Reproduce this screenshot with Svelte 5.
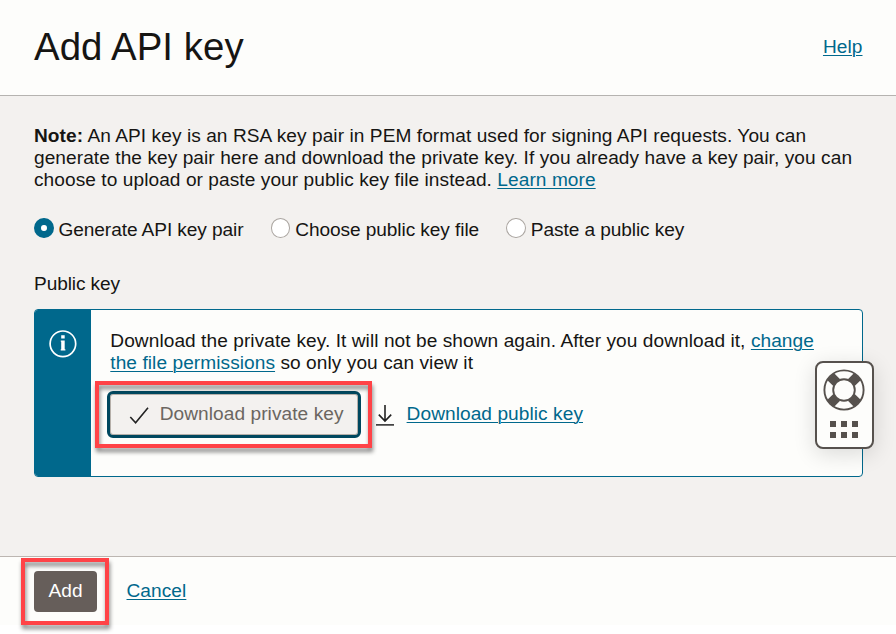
<script>
  const options = ['Generate API key pair', 'Choose public key file', 'Paste a public key'];
  let selected = $state(0);
  const dots = [0, 1, 2, 3, 4, 5];
</script>

<div class="panel">
  <header>
    <h1>Add API key</h1>
    <a href="#help">Help</a>
  </header>

  <main>
    <p class="note">
      <b>Note:</b> An API key is an RSA key pair in PEM format used for signing API requests. You can<br />
      generate the key pair here and download the private key. If you already have a key pair, you can<br />
      choose to upload or paste your public key file instead. <a href="#more">Learn more</a>
    </p>

    <div class="radios">
      {#each options as option, i}
        <label>
          <input type="radio" name="source" value={i} bind:group={selected} />
          <span>{option}</span>
        </label>
      {/each}
    </div>

    <div class="field">Public key</div>

    <section class="notice">
      <div class="stripe">
        <svg width="28" height="28" viewBox="0 0 28 28">
          <circle cx="13.9" cy="13.8" r="12.8" fill="none" stroke="#fff" stroke-width="1.7" />
          <path d="M12.2 5.2h3.5v3.2h-3.5zM11.8 10.4h3.9v8.8h.7v1.3h-4.7v-1.3h.5v-7.4h-.4z" fill="#fff" />
        </svg>
      </div>
      <div class="content">
        <p>
          Download the private key. It will not be shown again. After you download it, <a href="#permissions">change<br />
          the file permissions</a> so only you can view it
        </p>
        <div class="actions">
          <div class="mark private">
            <button class="download">
              <svg width="20" height="18" viewBox="0 0 20 18">
                <path d="M1.3 10 6.6 15.7 19 .8" fill="none" stroke="#222" stroke-width="1.6" />
              </svg>
              <span>Download private key</span>
            </button>
          </div>
          <svg class="arrow" width="18" height="22" viewBox="0 0 18 22">
            <path d="M9 0v16M2.8 9.6 9 16l6.2-6.4" fill="none" stroke="#222" stroke-width="1.6" />
            <path d="M0 19.8h18" stroke="#444" stroke-width="1.7" />
          </svg>
          <a href="#public">Download public key</a>
        </div>
      </div>
    </section>
  </main>

  <footer>
    <div class="mark submit"><button class="add">Add</button></div>
    <a href="#cancel">Cancel</a>
  </footer>

  <aside>
    <svg width="42" height="42" viewBox="0 0 42 42">
      <g fill="none" stroke="#56514d">
        <path d="M13.7 13.7 7.5 7.5M28.3 13.7l6.2-6.2M28.3 28.3l6.2 6.2M13.7 28.3l-6.2 6.2" stroke-width="9.6" />
        <circle cx="21" cy="21" r="19.6" stroke-width="1.9" />
        <circle cx="21" cy="21" r="10.8" fill="#fdfdfb" stroke-width="1.9" />
      </g>
    </svg>
    <div class="dots">
      {#each dots as dot (dot)}<i></i>{/each}
    </div>
  </aside>
</div>

<style>
  :global(body) { background: #fff; overflow: hidden; }
  .panel {
    position: relative; box-sizing: border-box; width: 896px; height: 634px;
    display: flex; flex-direction: column;
    font: 19.1px/22px "Liberation Sans", Arial, sans-serif; letter-spacing: .067px; color: #161513; background: #fff;
  }
  h1, p { margin: 0; font-weight: 400; }
  a { color: #00688c; text-decoration: underline; text-decoration-thickness: 1px; text-underline-offset: 2px; }
  header {
    box-sizing: border-box; height: 96px; flex: none; display: flex; align-items: center;
    justify-content: space-between; padding: 0 33.5px 1px 34px; border-bottom: 1px solid #b5b3b0; background: #fdfdfb;
  }
  h1 { font-size: 38.4px; line-height: 46px; letter-spacing: .05px; }
  main { box-sizing: border-box; height: 460px; flex: none; padding: 29px 33px 0 34px; background: #f3f1ef; }
  .note { white-space: nowrap; }
  .radios { display: flex; gap: 27.2px; margin-top: 28px; letter-spacing: -.085px; }
  label { display: flex; align-items: center; gap: 5px; height: 22px; white-space: nowrap; }
  input {
    appearance: none; box-sizing: border-box; flex: none; width: 19.5px; height: 20px; margin: -5px 0 0;
    border: 1px solid #aaa5a0; border-radius: 50%; background: #fff;
  }
  input:checked { border: 7px solid #00688c; }
  .field { margin-top: 32px; letter-spacing: -.1px; }
  .notice {
    box-sizing: border-box; display: flex; height: 168px; margin-top: 14px; overflow: hidden;
    border: 1px solid #00688c; border-radius: 4px; background: #fdfdfb;
  }
  .stripe { box-sizing: border-box; width: 56px; flex: none; padding: 20px 0 0 14px; background: #00688c; }
  .content { padding: 20px 0 0 19.3px; white-space: nowrap; }
  .actions { display: flex; align-items: flex-start; margin: 7px 0 0 -15.3px; }
  .mark { position: relative; box-sizing: border-box; }
  .mark::after {
    content: ""; position: absolute; inset: 0; border: 4px solid #ff4347;
    filter: drop-shadow(1px 4px 2px #0007); pointer-events: none;
  }
  .private { width: 277px; height: 67px; padding: 10px 12px; }
  button { font: inherit; letter-spacing: inherit; }
  .download {
    box-sizing: border-box; display: flex; align-items: center; width: 254px; height: 47px; padding: 0 0 2px 19px;
    border: 3px solid #00485f; border-radius: 6px; background: #f3f1ef; color: #6b6661;
    box-shadow: inset 0 0 0 1px #b5afa9;
  }
  .download svg { flex: none; margin: 4px 10.7px 0 0; }
  .arrow { margin: 24px 12.6px 0 4px; }
  .actions > a { margin-top: 22px; }
  footer { display: flex; height: 68px; flex: none; border-top: 1px solid #bcb6b1; background: #fdfdfb; }
  .submit { width: 88px; height: 67px; margin: 1px 17.5px 0 21px; padding: 13px; }
  .add { width: 63px; height: 41px; padding: 0 0 2px; border: 0; border-radius: 4px; background: #665e5a; color: #fff; }
  footer > a { margin-top: 23px; }
  aside {
    position: absolute; left: 815px; top: 361px; box-sizing: border-box; width: 59px; height: 88px;
    display: flex; flex-direction: column; align-items: center; padding: 6px 2px 0 0;
    border: 2px solid #56514d; border-radius: 8px; background: #fdfdfb; box-shadow: 0 5px 22px #00000024;
  }
  .dots { display: grid; grid-template-columns: repeat(3, 6px); gap: 5px; margin-top: 10px; }
  .dots i { width: 6px; height: 6px; background: #56514d; }
</style>
